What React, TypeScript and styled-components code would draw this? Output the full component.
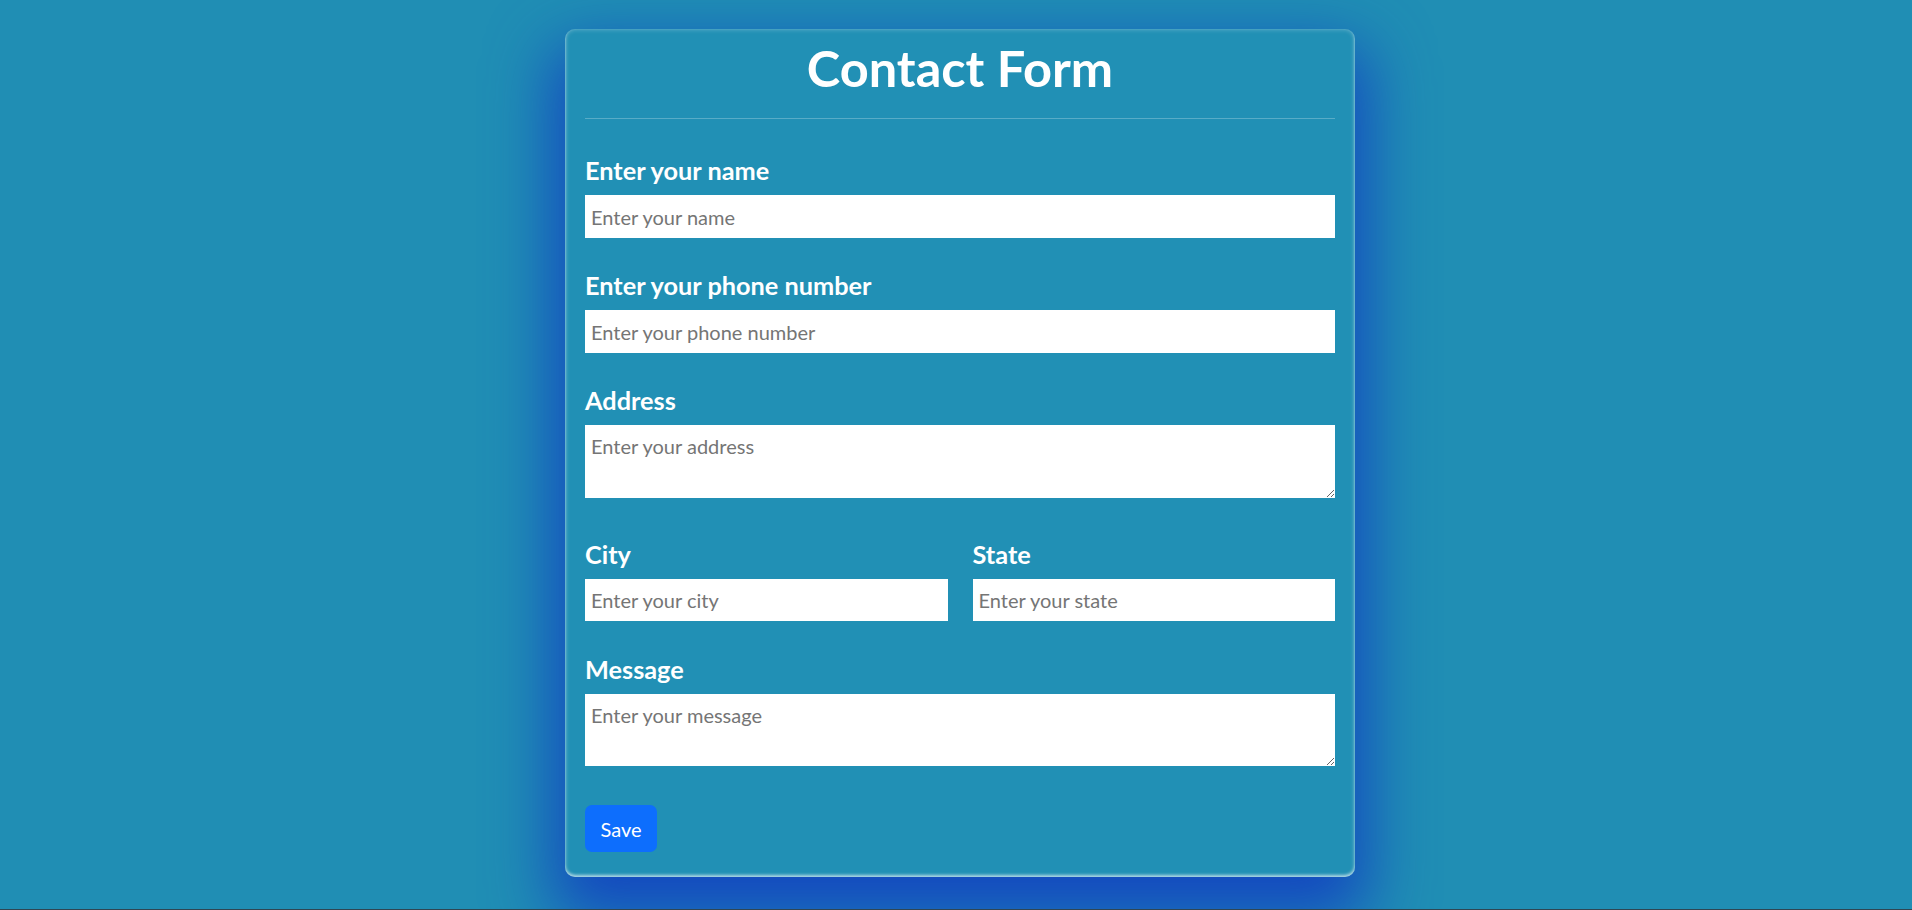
import React from "react";
import styled, { createGlobalStyle } from "styled-components";

const GlobalStyle = createGlobalStyle`
  html, body {
    margin: 0;
    padding: 0;
    background: #208eb4;
  }
  body {
    font-family: "Lato", "Segoe UI", "Open Sans", sans-serif;
    overflow: hidden;
  }
  * { box-sizing: border-box; }
`;

const Page = styled.div`
  height: 910px;
  background: #208eb4;
  border-bottom: 1px solid #2f4653;
  display: flex;
  justify-content: center;
  align-items: flex-start;
  padding: 29px 0 0 8px;
  overflow: hidden;
`;

const Card = styled.form`
  width: 790px;
  background: #2190b5;
  border-radius: 10px;
  padding: 9px 20px 25px;
  display: flex;
  flex-direction: column;
  box-shadow:
    0 30px 64px 12px rgba(20, 72, 192, 1),
    inset 0 -2px 3px rgba(255, 255, 255, 0.55),
    inset 0 0 5px rgba(255, 255, 255, 0.35);
`;

const Title = styled.h1`
  margin: 0;
  color: #ffffff;
  font-family: "Lato", sans-serif;
  font-weight: 700;
  font-size: 50.5px;
  line-height: 60px;
  text-align: center;
`;

const Divider = styled.hr`
  margin: 20px 0 36px;
  border: none;
  border-top: 1px solid rgba(255, 255, 255, 0.25);
  height: 0;
`;

const Field = styled.div<{ $gap?: number }>`
  display: flex;
  flex-direction: column;
  gap: 10px;
  margin-bottom: ${(p) => (p.$gap ?? 32)}px;
  min-width: 0;
`;

const Label = styled.label`
  color: #ffffff;
  font-family: "Lato", sans-serif;
  font-weight: 700;
  font-size: 25.3px;
  line-height: 30px;
`;

const Input = styled.input<{ $h?: number }>`
  display: block;
  width: 100%;
  height: ${(p) => p.$h ?? 43}px;
  border: none;
  border-radius: 0;
  outline: none;
  background: #ffffff;
  padding: 0 6px;
  font-family: "Lato", sans-serif;
  font-size: 20px;
  color: #212529;
  &::placeholder {
    color: #757575;
  }
`;

const TextArea = styled.textarea<{ $h: number }>`
  display: block;
  width: 100%;
  height: ${(p) => p.$h}px;
  border: none;
  border-radius: 0;
  outline: none;
  background: #ffffff;
  padding: 9px 6px;
  font-family: "Lato", sans-serif;
  font-size: 20px;
  line-height: 24px;
  color: #212529;
  &::placeholder {
    color: #757575;
  }
`;

const Row = styled.div`
  display: grid;
  grid-template-columns: 1fr 1fr;
  column-gap: 25px;
`;

const SaveButton = styled.button`
  align-self: flex-start;
  width: 72px;
  height: 47px;
  border: none;
  border-radius: 7px;
  background: #0d6efd;
  color: #ffffff;
  font-family: "Lato", sans-serif;
  font-size: 20px;
  cursor: pointer;
  margin-top: 7px;
`;

export default function App() {
  return (
    <>
      <GlobalStyle />
      <Page>
        <Card onSubmit={(e) => e.preventDefault()}>
          <Title>Contact Form</Title>
          <Divider />
          <Field>
            <Label htmlFor="name">Enter your name</Label>
            <Input id="name" placeholder="Enter your name" />
          </Field>
          <Field>
            <Label htmlFor="phone">Enter your phone number</Label>
            <Input id="phone" placeholder="Enter your phone number" />
          </Field>
          <Field $gap={41}>
            <Label htmlFor="address">Address</Label>
            <TextArea id="address" $h={73} placeholder="Enter your address" />
          </Field>
          <Row>
            <Field $gap={33}>
              <Label htmlFor="city">City</Label>
              <Input id="city" $h={42} placeholder="Enter your city" />
            </Field>
            <Field $gap={33}>
              <Label htmlFor="state">State</Label>
              <Input id="state" $h={42} placeholder="Enter your state" />
            </Field>
          </Row>
          <Field $gap={32}>
            <Label htmlFor="message">Message</Label>
            <TextArea id="message" $h={72} placeholder="Enter your message" />
          </Field>
          <SaveButton type="submit">Save</SaveButton>
        </Card>
      </Page>
    </>
  );
}
